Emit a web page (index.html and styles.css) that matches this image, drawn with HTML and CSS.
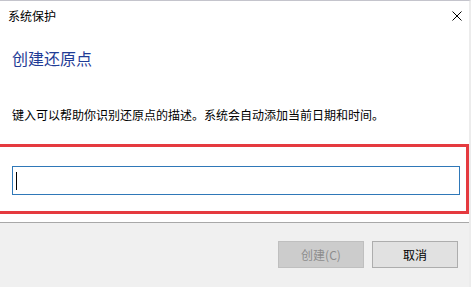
FILE: index.html
```html
<!DOCTYPE html>
<html lang="zh-CN">
<head>
<meta charset="utf-8">
<title>系统保护</title>
<link rel="stylesheet" href="styles.css">
</head>
<body>
<div class="dialog">
  <div class="titlebar">
    <span class="title">系统保护</span>
    <svg class="close" width="10" height="10" viewBox="0 0 10 10" aria-hidden="true">
      <path d="M0.5 0.5 L9.5 9.5 M9.5 0.5 L0.5 9.5" stroke="#000" stroke-width="1" fill="none"/>
    </svg>
  </div>
  <div class="content">
    <h1 class="heading">创建还原点</h1>
    <p class="desc">键入可以帮助你识别还原点的描述。系统会自动添加当前日期和时间。</p>
  </div>
  <div class="highlight">
    <div class="field"><span class="caret"></span></div>
  </div>
  <div class="footer">
    <button class="btn btn-disabled" type="button">创建(C)</button>
    <button class="btn" type="button">取消</button>
  </div>
</div>
</body>
</html>
```
FILE: styles.css
```css
* { box-sizing: border-box; }
html, body {
  margin: 0;
  padding: 0;
  width: 471px;
  height: 287px;
  overflow: hidden;
  background: #f0f0f0;
}
body {
  font-family: "Noto Sans CJK SC", "Noto Sans", sans-serif;
  font-size: 12px;
  color: #000;
}
.dialog {
  width: 471px;
  height: 287px;
  display: flex;
  flex-direction: column;
  background: #fff;
  border-top: 1px solid #c4c4cc;
  border-right: 2px solid #ececec;
}
.titlebar {
  height: 30px;
  display: flex;
  align-items: center;
  justify-content: space-between;
  padding: 0 7px 0 8px;
}
.title {
  font-size: 12px;
  line-height: 30px;
}
.close {
  display: block;
  margin-top: -1px;
}
.content {
  padding: 0 12px;
}
.heading {
  margin: 17px 0 0;
  font-size: 16px;
  font-weight: normal;
  line-height: 20px;
  color: #1f3c96;
}
.desc {
  margin: 39px 0 0;
  font-size: 12px;
  line-height: 16px;
  color: #000;
}
.highlight {
  margin-top: 21px;
  width: 469px;
  border: 3px solid #e53a3f;
  border-left: none;
  padding: 19px 6px 16px 12px;
}
.field {
  height: 29px;
  border: 1px solid #2f78b8;
  background: #fff;
  padding: 4px 3px;
}
.caret {
  display: block;
  width: 1px;
  height: 18px;
  margin-top: 1px;
  background: #000;
}
.footer {
  flex: 1;
  margin-top: 8px;
  border-top: 1px solid #a8a8a8;
  background: #f0f0f0;
  display: flex;
  justify-content: flex-end;
  align-items: flex-start;
  gap: 8px;
  padding: 18px 11px 0 0;
}
.btn {
  width: 86px;
  height: 27px;
  font-family: "Noto Sans CJK SC", "Noto Sans", sans-serif;
  font-size: 12px;
  color: #000;
  background: #e1e1e1;
  border: 1px solid #adadad;
  padding: 0;
  margin: 0;
}
.btn-disabled {
  color: #8c8c8c;
  background: #cccccc;
  border-color: #bfbfbf;
}
```
